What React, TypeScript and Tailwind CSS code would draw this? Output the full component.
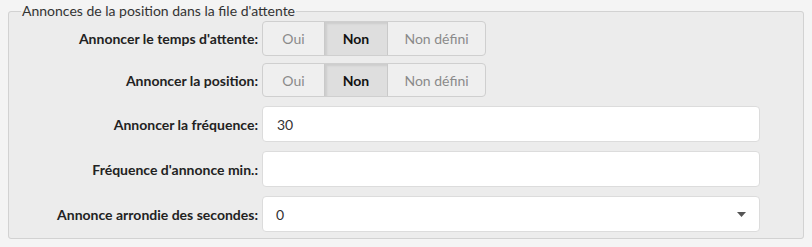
import React from "react";

function Toggle() {
  return (
    <div className="flex h-full w-[224px] rounded-[4px] border border-[#cfcfcf] bg-[#efefef] overflow-hidden text-[14px]">
      <div className="flex w-[61px] items-center justify-center text-[#8a8a8a]">Oui</div>
      <div className="flex w-[64px] items-center justify-center border-x border-[#c9c9c9] bg-[#dedede] font-bold text-[#111] shadow-[inset_2px_2px_2px_rgba(0,0,0,0.08)]">Non</div>
      <div className="flex flex-1 items-center justify-center text-[#8a8a8a]">Non défini</div>
    </div>
  );
}

function Row({ label, h, mt, children }: { label: string; h: string; mt: string; children: React.ReactNode }) {
  return (
    <div className={`flex items-center ${h} ${mt}`}>
      <div className="w-[253px] pr-[4px] text-right text-[14px] font-bold text-[#222]">{label}</div>
      <div className="h-full">{children}</div>
    </div>
  );
}

export default function App() {
  return (
    <div className="h-[247px] w-[812px] bg-[#f4f4f4] pt-[1px] pl-[8px]" style={{ fontFamily: "Lato, 'Open Sans', sans-serif" }}>
      <fieldset className="w-[796px] h-[238px] rounded-[3px] border border-[#d2d2d2] bg-[#ececec] pl-[12px] pr-0 pb-[6px] pt-0">
        <legend className="px-[1px] text-[14px] leading-[20px] text-[#333]">Annonces de la position dans la file d'attente</legend>
        <div className="-ml-[12px] flex flex-col">
          <Row label="Annoncer le temps d'attente:" h="h-[35px]" mt="mt-[0px]">
            <Toggle />
          </Row>
          <Row label="Annoncer la position:" h="h-[34px]" mt="mt-[7px]">
            <Toggle />
          </Row>
          <Row label="Annoncer la fréquence:" h="h-[36px]" mt="mt-[9px]">
            <div className="flex h-full w-[498px] items-center rounded-[4px] border border-[#dcdcdc] bg-white pl-[14px] text-[14px] text-[#333]">30</div>
          </Row>
          <Row label="Fréquence d'annonce min.:" h="h-[36px]" mt="mt-[9px]">
            <div className="flex h-full w-[498px] items-center rounded-[4px] border border-[#dcdcdc] bg-white pl-[14px] text-[14px] text-[#333]"></div>
          </Row>
          <Row label="Annonce arrondie des secondes:" h="h-[36px]" mt="mt-[9px]">
            <div className="flex h-full w-[498px] items-center justify-between rounded-[4px] border border-[#dcdcdc] bg-white pl-[13px] pr-[13px] text-[14px] text-[#333]">
              <span>0</span>
              <svg width="9" height="5" viewBox="0 0 9 5"><path d="M0 0H9L4.5 5Z" fill="#555" /></svg>
            </div>
          </Row>
        </div>
      </fieldset>
    </div>
  );
}
